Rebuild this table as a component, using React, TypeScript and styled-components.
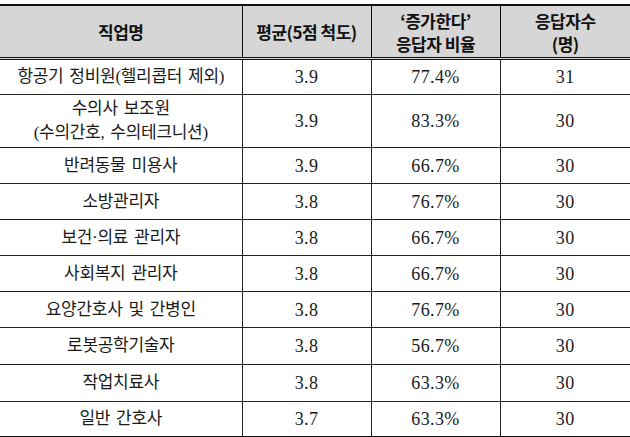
import React from "react";
import styled, { createGlobalStyle } from "styled-components";

const Global = createGlobalStyle`
  html, body { margin: 0; padding: 0; background: #ffffff; }
  body { width: 630px; height: 437px; overflow: hidden; }
`;

const Page = styled.div`
  padding-top: 4px;
`;

const Table = styled.table`
  width: 630px;
  border-collapse: collapse;
  table-layout: fixed;
  border-top: 2px solid #111;
  border-bottom: 2px solid #111;
`;

const HeadCell = styled.th`
  height: 51px;
  padding: 0;
  background: #d6d6d6;
  border-bottom: 3px double #111;
  border-left: 1px solid #111;
  font-family: "Noto Sans CJK KR", "Liberation Sans", sans-serif;
  font-weight: 700;
  font-size: 17px;
  line-height: 23px;
  letter-spacing: -0.5px;
  color: #111;
  text-align: center;
  vertical-align: middle;
  &:first-child { border-left: none; }
`;

const Row = styled.tr<{ $h: number }>`
  height: ${(p) => p.$h}px;
`;

const Cell = styled.td<{ $num?: boolean }>`
  padding: 0;
  border-top: 1px solid #222;
  border-left: 1px solid #222;
  text-align: center;
  vertical-align: middle;
  color: #1a1a1a;
  font-family: ${(p) =>
    p.$num
      ? `"Liberation Serif", "Times New Roman", serif`
      : `"Liberation Serif", "Noto Sans CJK KR", serif`};
  font-size: ${(p) => (p.$num ? "18px" : "17px")};
  letter-spacing: ${(p) => (p.$num ? "0.4px" : "-0.3px")};
  word-spacing: ${(p) => (p.$num ? "0" : "2px")};
  line-height: 24px;
  font-weight: 400;
  &:first-child { border-left: none; }
`;

type R = { name: React.ReactNode; avg: string; pct: string; n: string; h: number };

const rows: R[] = [
  { name: "항공기 정비원(헬리콥터 제외)", avg: "3.9", pct: "77.4%", n: "31", h: 36 },
  {
    name: (
      <>
        수의사 보조원
        <br />
        (수의간호, 수의테크니션)
      </>
    ),
    avg: "3.9",
    pct: "83.3%",
    n: "30",
    h: 53,
  },
  { name: "반려동물 미용사", avg: "3.9", pct: "66.7%", n: "30", h: 36 },
  { name: "소방관리자", avg: "3.8", pct: "76.7%", n: "30", h: 36 },
  { name: "보건·의료 관리자", avg: "3.8", pct: "66.7%", n: "30", h: 36 },
  { name: "사회복지 관리자", avg: "3.8", pct: "66.7%", n: "30", h: 36 },
  { name: "요양간호사 및 간병인", avg: "3.8", pct: "76.7%", n: "30", h: 36 },
  { name: "로봇공학기술자", avg: "3.8", pct: "56.7%", n: "30", h: 37 },
  { name: "작업치료사", avg: "3.8", pct: "63.3%", n: "30", h: 37 },
  { name: "일반 간호사", avg: "3.7", pct: "63.3%", n: "30", h: 35 },
];

export default function App() {
  return (
    <Page>
      <Global />
      <Table>
        <colgroup>
          <col style={{ width: 242 }} />
          <col style={{ width: 129 }} />
          <col style={{ width: 129 }} />
          <col style={{ width: 130 }} />
        </colgroup>
        <thead>
          <tr>
            <HeadCell>직업명</HeadCell>
            <HeadCell>평균(5점 척도)</HeadCell>
            <HeadCell>
              ‘증가한다’
              <br />
              응답자 비율
            </HeadCell>
            <HeadCell>
              응답자수
              <br />
              (명)
            </HeadCell>
          </tr>
        </thead>
        <tbody>
          {rows.map((r, i) => (
            <Row key={i} $h={r.h}>
              <Cell>{r.name}</Cell>
              <Cell $num>{r.avg}</Cell>
              <Cell $num>{r.pct}</Cell>
              <Cell $num>{r.n}</Cell>
            </Row>
          ))}
        </tbody>
      </Table>
    </Page>
  );
}
